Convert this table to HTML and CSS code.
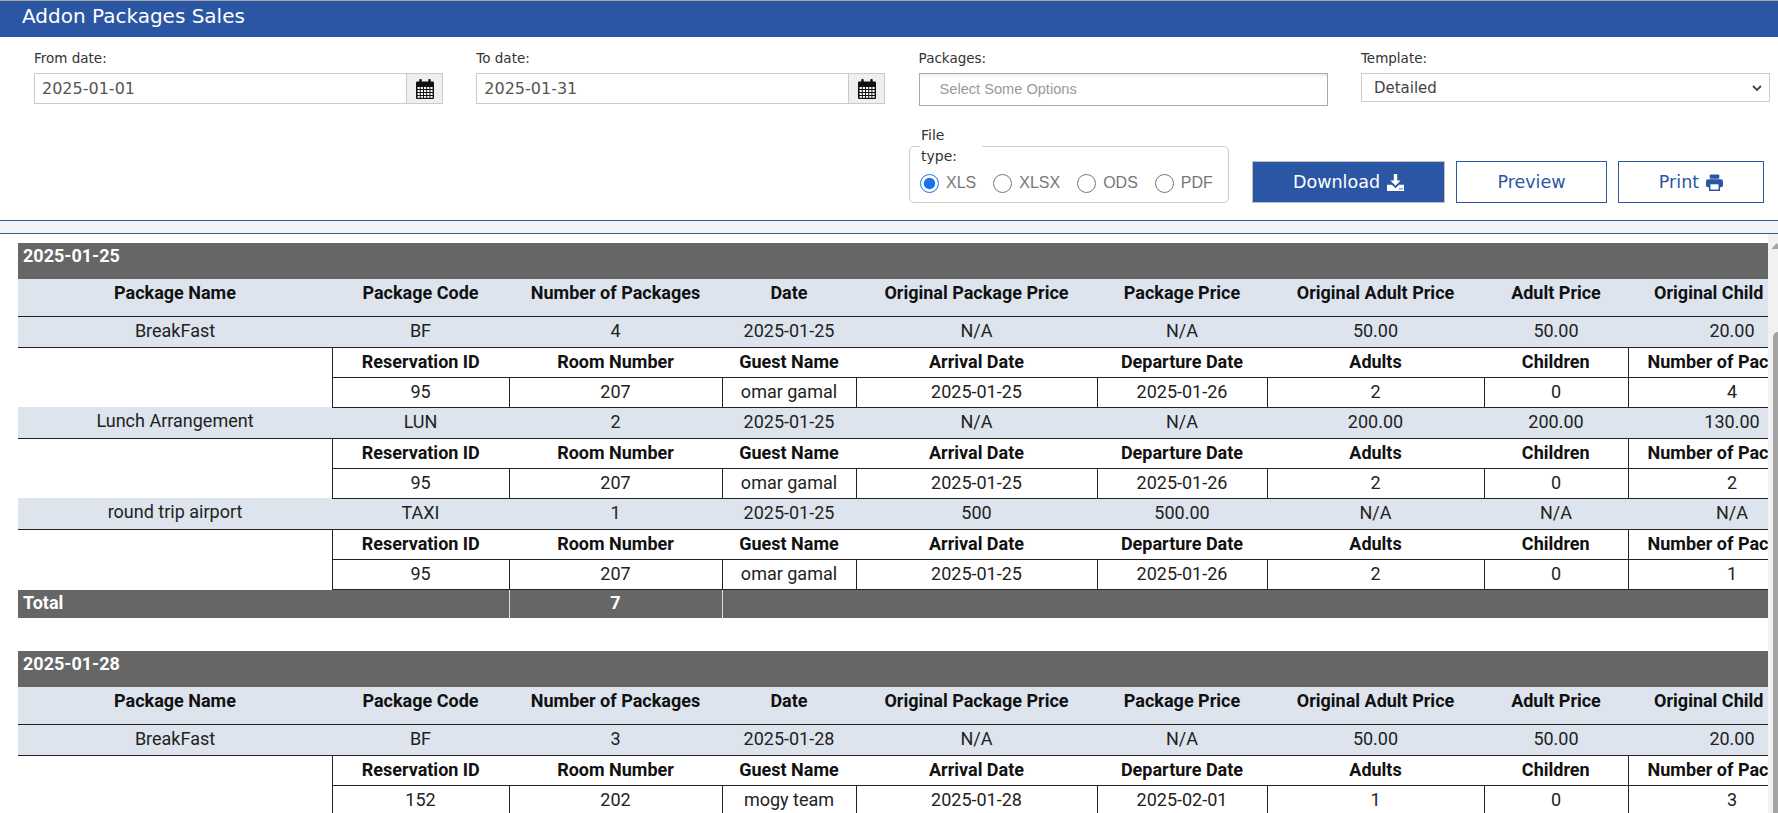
FILE: index.html
```html
<!DOCTYPE html>
<html lang="en">
<head>
<meta charset="utf-8">
<title>Addon Packages Sales</title>
<link rel="stylesheet" href="styles.css">
</head>
<body>
<header class="titlebar"><h1>Addon Packages Sales</h1></header>

<section class="filters">
  <div class="row1">
    <div class="field">
      <label>From date:</label>
      <div class="date-box">
        <input class="date-input" type="text" value="2025-01-01">
        <span class="cal-btn">
          <svg class="cal-icon" viewBox="0 0 18 20" width="18" height="20">
            <rect x="3.3" y="0" width="2.4" height="5" rx="0.8" fill="#111"/>
            <rect x="12.3" y="0" width="2.4" height="5" rx="0.8" fill="#111"/>
            <rect x="0" y="2.5" width="18" height="17.5" rx="1" fill="#111"/>
            <g fill="#fff">
              <rect x="1.6" y="8" width="2.2" height="2"/><rect x="4.8" y="8" width="2.2" height="2"/><rect x="8" y="8" width="2.2" height="2"/><rect x="11.2" y="8" width="2.2" height="2"/><rect x="14.4" y="8" width="2.2" height="2"/>
              <rect x="1.6" y="11" width="2.2" height="2"/><rect x="4.8" y="11" width="2.2" height="2"/><rect x="8" y="11" width="2.2" height="2"/><rect x="11.2" y="11" width="2.2" height="2"/><rect x="14.4" y="11" width="2.2" height="2"/>
              <rect x="1.6" y="14" width="2.2" height="2"/><rect x="4.8" y="14" width="2.2" height="2"/><rect x="8" y="14" width="2.2" height="2"/><rect x="11.2" y="14" width="2.2" height="2"/><rect x="14.4" y="14" width="2.2" height="2"/>
              <rect x="1.6" y="17" width="2.2" height="1.8"/><rect x="4.8" y="17" width="2.2" height="1.8"/><rect x="8" y="17" width="2.2" height="1.8"/><rect x="11.2" y="17" width="2.2" height="1.8"/><rect x="14.4" y="17" width="2.2" height="1.8"/>
            </g>
          </svg>
        </span>
      </div>
    </div>
    <div class="field">
      <label>To date:</label>
      <div class="date-box">
        <input class="date-input" type="text" value="2025-01-31">
        <span class="cal-btn">
          <svg class="cal-icon" viewBox="0 0 18 20" width="18" height="20">
            <rect x="3.3" y="0" width="2.4" height="5" rx="0.8" fill="#111"/>
            <rect x="12.3" y="0" width="2.4" height="5" rx="0.8" fill="#111"/>
            <rect x="0" y="2.5" width="18" height="17.5" rx="1" fill="#111"/>
            <g fill="#fff">
              <rect x="1.6" y="8" width="2.2" height="2"/><rect x="4.8" y="8" width="2.2" height="2"/><rect x="8" y="8" width="2.2" height="2"/><rect x="11.2" y="8" width="2.2" height="2"/><rect x="14.4" y="8" width="2.2" height="2"/>
              <rect x="1.6" y="11" width="2.2" height="2"/><rect x="4.8" y="11" width="2.2" height="2"/><rect x="8" y="11" width="2.2" height="2"/><rect x="11.2" y="11" width="2.2" height="2"/><rect x="14.4" y="11" width="2.2" height="2"/>
              <rect x="1.6" y="14" width="2.2" height="2"/><rect x="4.8" y="14" width="2.2" height="2"/><rect x="8" y="14" width="2.2" height="2"/><rect x="11.2" y="14" width="2.2" height="2"/><rect x="14.4" y="14" width="2.2" height="2"/>
              <rect x="1.6" y="17" width="2.2" height="1.8"/><rect x="4.8" y="17" width="2.2" height="1.8"/><rect x="8" y="17" width="2.2" height="1.8"/><rect x="11.2" y="17" width="2.2" height="1.8"/><rect x="14.4" y="17" width="2.2" height="1.8"/>
            </g>
          </svg>
        </span>
      </div>
    </div>
    <div class="field">
      <label>Packages:</label>
      <div class="chosen">Select Some Options</div>
    </div>
    <div class="field">
      <label>Template:</label>
      <div class="select">
        <span>Detailed</span>
        <svg class="chev" viewBox="0 0 10 6" width="10" height="6"><polyline points="1,1 5,5 9,1" fill="none" stroke="#444" stroke-width="1.8"/></svg>
      </div>
    </div>
  </div>

  <div class="row2">
    <fieldset class="filetype">
      <legend>File type:</legend>
      <div class="radios">
        <label class="radio"><input type="radio" name="ft" checked>XLS</label>
        <label class="radio"><input type="radio" name="ft">XLSX</label>
        <label class="radio"><input type="radio" name="ft">ODS</label>
        <label class="radio"><input type="radio" name="ft">PDF</label>
      </div>
    </fieldset>
    <button class="btn btn-primary">Download
      <svg viewBox="0 0 16 16" width="17" height="17"><path d="M6.4 0h3.2v6h3.2L8 11 3.2 6h3.2z" fill="#fff"/><path d="M0 10h4.6L8 13.4 11.4 10H16v6H0z" fill="#fff"/><rect x="11.6" y="13.3" width="1.2" height="1.2" fill="#2b56a4"/><rect x="13.6" y="13.3" width="1.2" height="1.2" fill="#2b56a4"/></svg>
    </button>
    <button class="btn btn-outline">Preview</button>
    <button class="btn btn-outline">Print
      <svg viewBox="0 0 16 16" width="17" height="17"><rect x="3.5" y="0.5" width="9" height="4" rx="1" fill="#2b56a4"/><rect x="0" y="5" width="16" height="7.5" rx="2" fill="#2b56a4"/><rect x="3.5" y="9" width="9" height="6.3" fill="#fff" stroke="#2b56a4" stroke-width="1.4"/></svg>
    </button>
  </div>
</section>

<div class="sep"></div>

<main class="report">
  <div class="report-body">
    <table class="rtable">
      <colgroup>
        <col class="c1"><col class="c2"><col class="c3"><col class="c4"><col class="c5"><col class="c6"><col class="c7"><col class="c8"><col class="c9"><col class="c10">
      </colgroup>
      <tr class="day"><td colspan="10">2025-01-25</td></tr>
      <tr class="head"><th>Package Name</th><th>Package Code</th><th>Number of Packages</th><th>Date</th><th>Original Package Price</th><th>Package Price</th><th>Original Adult Price</th><th>Adult Price</th><th>Original Child Price</th><th>Child Price</th></tr>

      <tr class="data"><td>BreakFast</td><td>BF</td><td>4</td><td>2025-01-25</td><td>N/A</td><td>N/A</td><td>50.00</td><td>50.00</td><td>20.00</td><td>20.00</td></tr>
      <tr class="subhead"><td class="blank"></td><th class="lb">Reservation ID</th><th>Room Number</th><th>Guest Name</th><th>Arrival Date</th><th>Departure Date</th><th>Adults</th><th>Children</th><th class="lb">Number of Packages</th><th></th></tr>
      <tr class="subrow"><td class="blank"></td><td>95</td><td>207</td><td>omar gamal</td><td>2025-01-25</td><td>2025-01-26</td><td>2</td><td>0</td><td>4</td><td></td></tr>

      <tr class="data"><td>Lunch Arrangement</td><td>LUN</td><td>2</td><td>2025-01-25</td><td>N/A</td><td>N/A</td><td>200.00</td><td>200.00</td><td>130.00</td><td>130.00</td></tr>
      <tr class="subhead"><td class="blank"></td><th class="lb">Reservation ID</th><th>Room Number</th><th>Guest Name</th><th>Arrival Date</th><th>Departure Date</th><th>Adults</th><th>Children</th><th class="lb">Number of Packages</th><th></th></tr>
      <tr class="subrow"><td class="blank"></td><td>95</td><td>207</td><td>omar gamal</td><td>2025-01-25</td><td>2025-01-26</td><td>2</td><td>0</td><td>2</td><td></td></tr>

      <tr class="data"><td>round trip airport</td><td>TAXI</td><td>1</td><td>2025-01-25</td><td>500</td><td>500.00</td><td>N/A</td><td>N/A</td><td>N/A</td><td>N/A</td></tr>
      <tr class="subhead"><td class="blank"></td><th class="lb">Reservation ID</th><th>Room Number</th><th>Guest Name</th><th>Arrival Date</th><th>Departure Date</th><th>Adults</th><th>Children</th><th class="lb">Number of Packages</th><th></th></tr>
      <tr class="subrow"><td class="blank"></td><td>95</td><td>207</td><td>omar gamal</td><td>2025-01-25</td><td>2025-01-26</td><td>2</td><td>0</td><td>1</td><td></td></tr>

      <tr class="total"><td colspan="2" class="tl">Total</td><td>7</td><td colspan="7"></td></tr>
    </table>

    <table class="rtable">
      <colgroup>
        <col class="c1"><col class="c2"><col class="c3"><col class="c4"><col class="c5"><col class="c6"><col class="c7"><col class="c8"><col class="c9"><col class="c10">
      </colgroup>
      <tr class="day"><td colspan="10">2025-01-28</td></tr>
      <tr class="head"><th>Package Name</th><th>Package Code</th><th>Number of Packages</th><th>Date</th><th>Original Package Price</th><th>Package Price</th><th>Original Adult Price</th><th>Adult Price</th><th>Original Child Price</th><th>Child Price</th></tr>

      <tr class="data"><td>BreakFast</td><td>BF</td><td>3</td><td>2025-01-28</td><td>N/A</td><td>N/A</td><td>50.00</td><td>50.00</td><td>20.00</td><td>20.00</td></tr>
      <tr class="subhead"><td class="blank"></td><th class="lb">Reservation ID</th><th>Room Number</th><th>Guest Name</th><th>Arrival Date</th><th>Departure Date</th><th>Adults</th><th>Children</th><th class="lb">Number of Packages</th><th></th></tr>
      <tr class="subrow"><td class="blank"></td><td>152</td><td>202</td><td>mogy team</td><td>2025-01-28</td><td>2025-02-01</td><td>1</td><td>0</td><td>3</td><td></td></tr>

      <tr class="total"><td colspan="2" class="tl">Total</td><td>3</td><td colspan="7"></td></tr>
    </table>
  </div>
  <div class="vscroll">
    <svg class="up-arrow" viewBox="0 0 10 17" width="10" height="17"><polygon points="8.5,9 3.5,15 13.5,15" fill="#a3a3a3"/></svg>
    <div class="thumb"></div>
  </div>
</main>
</body>
</html>
```

FILE: styles.css
```css
* { box-sizing: border-box; }

html, body {
  margin: 0;
  height: 100%;
  overflow: hidden;
}

body {
  font-family: "DejaVu Sans", Verdana, sans-serif;
  color: #333;
  background: #fff;
  display: flex;
  flex-direction: column;
}

/* Title bar */
.titlebar {
  flex: none;
  height: 37px;
  border-top: 1px solid #a9a9a9;
  background: #2b56a4;
  padding: 3px 0 0 22px;
}
.titlebar h1 {
  margin: 0;
  font-size: 20px;
  line-height: 24px;
  font-weight: normal;
  color: #fff;
}

/* Filters */
.filters {
  flex: none;
  padding: 11px 14px 17px 34px;
}
.row1 {
  display: grid;
  grid-template-columns: repeat(4, 409px);
  column-gap: 33.3px;
  align-items: start;
}
.field label {
  display: block;
  font-size: 13.5px;
  line-height: 20px;
  color: #333;
  margin-bottom: 5px;
}
.date-box {
  display: flex;
  height: 31px;
  border: 1px solid #c6cbd4;
}
.date-input {
  flex: 1;
  min-width: 0;
  border: 0;
  outline: none;
  background: transparent;
  padding: 0 0 0 7px;
  font-family: "DejaVu Sans", Verdana, sans-serif;
  font-size: 16px;
  color: #555;
}
.cal-btn {
  width: 36px;
  border-left: 1px solid #c6cbd4;
  background: #efefef;
  display: flex;
  align-items: center;
  justify-content: center;
}
.cal-icon { display: block; }

.chosen {
  height: 33px;
  border: 1px solid #aaa;
  background: linear-gradient(#eee 1%, #fff 15%);
  padding-left: 20px;
  font-family: "Liberation Sans", Arial, sans-serif;
  font-size: 14.6px;
  line-height: 31px;
  color: #999;
}

.select {
  height: 29px;
  border: 1px solid #c6cbd4;
  display: flex;
  align-items: center;
  justify-content: space-between;
  padding: 0 7px 0 12px;
  font-size: 15px;
  color: #444;
}
.chev { display: block; }

.row2 {
  display: flex;
  justify-content: flex-end;
  align-items: flex-end;
  gap: 11px;
  margin-top: 19px;
}
.filetype {
  width: 320px;
  margin: 0 12px 0 0;
  padding: 0 10px 3px 10px;
  border: 1px solid #ccc;
  border-radius: 5px;
}
.filetype legend {
  width: 62px;
  padding: 0 1px;
  font-size: 14px;
  line-height: 21px;
  color: #333;
}
.radios {
  display: flex;
  align-items: center;
  gap: 17px;
  height: 32px;
}
.radio {
  display: flex;
  align-items: center;
  gap: 7px;
  font-family: "Liberation Sans", Arial, sans-serif;
  font-size: 16px;
  color: #777;
}
.radio input {
  width: 19px;
  height: 19px;
  margin: 0;
  accent-color: #1a73e8;
}

.btn {
  height: 42px;
  display: flex;
  align-items: center;
  justify-content: center;
  gap: 7px;
  padding: 0;
  font-family: "DejaVu Sans", Verdana, sans-serif;
  font-size: 17.5px;
  cursor: pointer;
}
.btn svg { display: block; }
.btn-primary {
  width: 193px;
  background: #2b56a4;
  color: #fff;
  border: 1px solid #c0c0c0;
}
.btn-outline {
  background: #fff;
  color: #2b56a4;
  border: 1px solid #2b56a4;
  width: 151px;
}
.btn-outline:last-child { width: 146px; }

/* Separator band */
.sep {
  flex: none;
  height: 14px;
  border-top: 1px solid #2d5eab;
  border-bottom: 1px solid #2d5eab;
  background: #f4f4f4;
}

/* Report */
.report {
  flex: 1;
  min-height: 0;
  display: flex;
}
.report-body {
  flex: 1;
  min-width: 0;
  overflow: hidden;
  padding: 9px 0 0 18px;
}
.vscroll {
  flex: none;
  width: 10px;
  background: #f1f1f1;
  overflow: hidden;
}
.up-arrow { display: block; }
.thumb {
  margin: 81px 0 0 5px;
  height: 700px;
  background: #a3a3a3;
  border-radius: 5px 0 0 5px;
}

.rtable {
  border-collapse: collapse;
  table-layout: fixed;
  width: 1998px;
  font-family: Roboto, "Liberation Sans", sans-serif;
  font-size: 18px;
  color: #222;
  margin-bottom: 33px;
}
.c1 { width: 314px; }
.c2 { width: 177px; }
.c3 { width: 213px; }
.c4 { width: 134px; }
.c5 { width: 241px; }
.c6 { width: 170px; }
.c7 { width: 217px; }
.c8 { width: 144px; }
.c9 { width: 208px; }
.c10 { width: 180px; }

.rtable td,
.rtable th {
  padding: 3px 4px 0;
  vertical-align: top;
  line-height: 21px;
  text-align: center;
  white-space: nowrap;
  overflow: hidden;
}
.rtable th { font-weight: 700; color: #111; }

.day { height: 36px; }
.day td {
  background: #666;
  color: #fff;
  font-weight: 700;
  text-align: left;
  padding: 2px 5px 0;
}

.head { height: 37px; }
.head th {
  background: #dde4ee;
  border-bottom: 1px solid #222;
}

.data { height: 31px; }
.data td {
  background: #dde4ee;
  border-bottom: 1px solid #222;
}

.subhead { height: 30px; }
.subhead th { border-bottom: 1px solid #222; }
.subhead th.lb { border-left: 1px solid #222; }
.subhead .blank { border: 0; }

.subrow { height: 30px; }
.subrow td { border: 1px solid #222; }
.subrow td.blank { border: 0; }

.total { height: 29px; }
.total td {
  background: #666;
  color: #fff;
  font-weight: 700;
  padding-top: 2px;
  border-left: 1px solid #ddd;
  border-right: 1px solid #ddd;
}
.total td.tl { text-align: left; padding-left: 5px; border-left: 0; }
```
